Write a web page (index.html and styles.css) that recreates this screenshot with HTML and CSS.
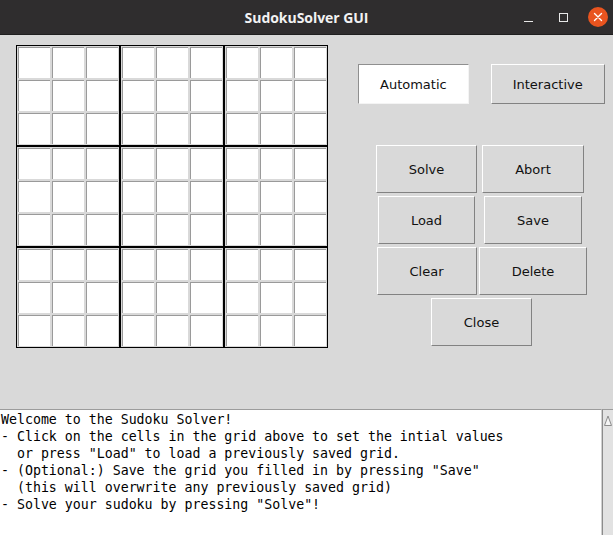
FILE: index.html
```html
<!DOCTYPE html>
<html lang="en">
<head>
<meta charset="utf-8">
<title>SudokuSolver GUI</title>
<link rel="stylesheet" href="styles.css">
</head>
<body>
<div class="window">
  <header class="titlebar">
    <span class="spacer"></span>
    <span class="title">SudokuSolver GUI</span>
    <div class="wm-buttons">
      <span class="wm-min"></span>
      <span class="wm-max"></span>
      <span class="wm-close">
        <svg width="20" height="20" viewBox="0 0 20 20"><path d="M6.5 6.5 L13.5 13.5 M13.5 6.5 L6.5 13.5" stroke="#fff" stroke-width="1.4" stroke-linecap="round"/></svg>
      </span>
    </div>
  </header>

  <main class="main">
    <div class="board" id="board"></div>

    <div class="controls">
      <div class="modes">
        <button class="mode mode-active">Automatic</button>
        <button class="mode">Interactive</button>
      </div>
      <div class="actions">
        <button class="btn">Solve</button>
        <button class="btn">Abort</button>
        <button class="btn">Load</button>
        <button class="btn">Save</button>
        <button class="btn">Clear</button>
        <button class="btn">Delete</button>
        <button class="btn btn-wide">Close</button>
      </div>
    </div>
  </main>

  <section class="console">
<pre class="log">Welcome to the Sudoku Solver!
- Click on the cells in the grid above to set the intial values
  or press "Load" to load a previously saved grid.
- (Optional:) Save the grid you filled in by pressing "Save"
  (this will overwrite any previously saved grid)
- Solve your sudoku by pressing "Solve"!</pre>
    <div class="scrollbar">
      <span class="arrow">
        <svg width="8" height="11" viewBox="0 0 8 11"><path d="M0.5 10.5 L4 1 L7.5 10.5 Z" fill="#f4f4f4" stroke="#8c8c8c" stroke-width="1"/></svg>
      </span>
    </div>
  </section>
</div>
<script src="app.js"></script>
</body>
</html>
```

FILE: app.js
```js
const board = document.getElementById('board');
for (let b = 0; b < 9; b++) {
  const block = document.createElement('div');
  block.className = 'block';
  for (let c = 0; c < 9; c++) {
    const cell = document.createElement('div');
    cell.className = 'cell';
    block.appendChild(cell);
  }
  board.appendChild(block);
}
```

FILE: styles.css
```css
html, body {
  margin: 0;
  padding: 0;
}

body {
  width: 613px;
  height: 535px;
  overflow: hidden;
  background: #d9d9d9;
  font-family: "DejaVu Sans", sans-serif;
}

.window {
  display: flex;
  flex-direction: column;
  height: 535px;
}

/* title bar */
.titlebar {
  height: 34px;
  border-bottom: 1px solid #1f1f1f;
  background: #2f2d2e;
  display: grid;
  grid-template-columns: 1fr auto 1fr;
  align-items: center;
}

.title {
  color: #f2f2f2;
  font-family: "Open Sans", sans-serif;
  font-weight: 700;
  font-size: 14px;
  letter-spacing: -0.05px;
}

.wm-buttons {
  justify-self: end;
  display: flex;
  align-items: center;
  padding-right: 5px;
}

.wm-min {
  width: 9px;
  height: 8px;
  border-bottom: 1px solid #e8e8e8;
  margin-right: 26px;
}

.wm-max {
  width: 7px;
  height: 7px;
  border: 1px solid #e8e8e8;
  margin-right: 20px;
}

.wm-close {
  width: 20px;
  height: 20px;
  border-radius: 50%;
  background: #e9541f;
  display: flex;
}

/* main area */
.main {
  height: 374px;
  display: flex;
  align-items: flex-start;
  padding: 10px 0 0 16px;
  box-sizing: border-box;
}

.board {
  display: grid;
  grid-template-columns: repeat(3, 104px);
  grid-template-rows: repeat(3, 101px);
}

.block {
  border: 1px solid #000;
  display: grid;
  grid-template-columns: repeat(3, 34px);
  grid-template-rows: repeat(3, 33px);
}

.cell {
  background: #fff;
  border: 1px solid #d9d9d9;
  box-shadow: inset 1px 1px 0 #9a9a9a;
}

.controls {
  margin-left: 30px;
  padding-top: 19px;
}

.modes {
  display: flex;
  gap: 22px;
}

button {
  font-family: "DejaVu Sans", sans-serif;
  font-size: 13px;
  color: #111;
  background: #d9d9d9;
  border: 1px solid;
  border-color: #ffffff #828282 #828282 #ffffff;
  border-radius: 0;
  margin: 0;
}

.mode {
  height: 40px;
  padding: 0 21px;
}

.mode-active {
  background: #ffffff;
  border-color: #8f8f8f #f4f4f4 #f4f4f4 #8f8f8f;
}

.actions {
  margin-top: 41px;
  margin-left: 17px;
  display: grid;
  grid-template-columns: 103px 110px;
  row-gap: 3px;
  justify-items: center;
}

.btn {
  height: 48px;
  padding: 0 32px;
}

.btn-wide {
  grid-column: 1 / -1;
}

/* console */
.console {
  flex: 1;
  display: flex;
  min-height: 0;
}

.log {
  flex: 1;
  margin: 0;
  background: #fff;
  border-top: 1px solid #9c9c9c;
  border-right: 1px solid #d0d0d0;
  padding: 1px 0 0 1px;
  font-family: "DejaVu Sans Mono", monospace;
  font-size: 13.25px;
  line-height: 17px;
  color: #000;
  overflow: hidden;
}

.scrollbar {
  width: 9px;
  background: #e2e2e2;
  border-left: 1px solid #8c8c8c;
  border-top: 1px solid #9c9c9c;
  padding-left: 1px;
}

.arrow {
  display: block;
  padding-top: 1px;
}
```
